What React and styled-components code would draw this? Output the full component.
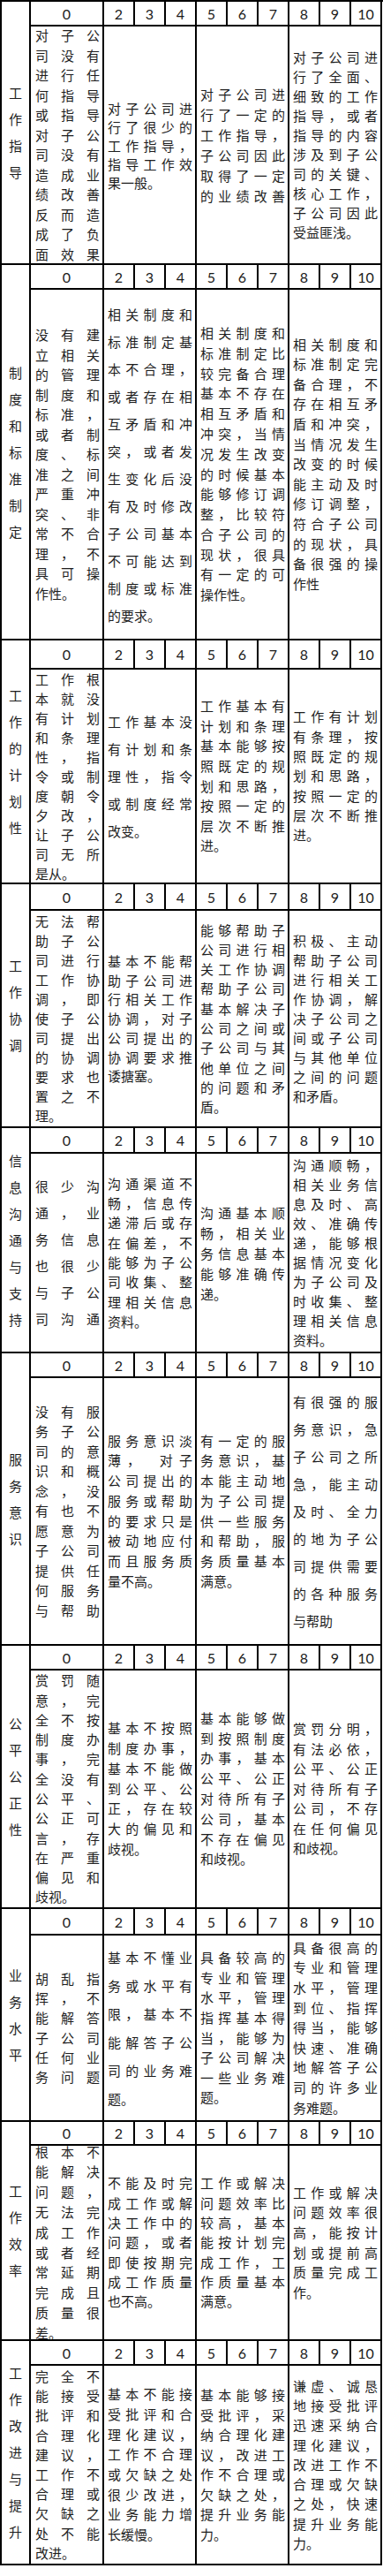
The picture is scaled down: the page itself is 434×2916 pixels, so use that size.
import React from 'react';
import styled, { createGlobalStyle } from 'styled-components';

const GlobalStyle = createGlobalStyle`
  html, body {
    margin: 0;
    padding: 0;
    background: #fff;
  }
  body {
    font-family: "Noto Sans CJK SC", "Noto Sans", sans-serif;
    color: #1e1e1e;
  }
`;

const SCORES = ['0', '2', '3', '4', '5', '6', '7', '8', '9', '10'];

const SECTIONS = [
  {
    label: '工作指导',
    hh: 28,
    bh: 270,
    cells: [
      { lh: 22.5, lines: ['对子公', '司没有', '进行任', '何指导', '或指导', '对子公', '司没有', '造成业', '绩改善', '反而造', '成了负', '面效果'], full: true },
      { lh: 21, lines: ['对子公司进', '行了很少的', '工作指导，', '指导工作效', '果一般。'] },
      { lh: 23, lines: ['对子公司进', '行了一定的', '工作指导，', '子公司因此', '取得了一定', '的业绩改善'], full: true },
      { lh: 22, lines: ['对子公司进', '行了全面、', '细致的工作', '指导，或者', '指导的内容', '涉及到子公', '司的关键、', '核心工作，', '子公司因此', '受益匪浅。'] },
    ],
  },
  {
    label: '制度和标准制定',
    hh: 28,
    bh: 397,
    cells: [
      { lh: 22.5, lines: ['没有建', '立相关', '的管理', '制度和', '标准，', '或者制', '度、标', '准之间', '严重冲', '突、非', '常不合', '理，不', '具可操', '作性。'] },
      { lh: 31, lines: ['相关制度和', '标准制定基', '本不合理，', '或者存在相', '互矛盾和冲', '突，或者发', '生变化后没', '有及时修改', '子公司基本', '不可能达到', '制度或标准', '的要求。'] },
      { lh: 22.8, lines: ['相关制度和', '标准制定比', '较完备合理', '基本不存在', '相互矛盾和', '冲突，当情', '况发生改变', '的时候基本', '能够修订调', '整，比较符', '合子公司的', '现状，很具', '有一定的可', '操作性。'] },
      { lh: 22.6, lines: ['相关制度和', '标准制定完', '备合理，不', '存在相互矛', '盾和冲突，', '当情况发生', '改变的时候', '能主动及时', '修订调整，', '符合子公司', '的现状，具', '备很强的操', '作性'] },
    ],
  },
  {
    label: '工作的计划性',
    hh: 33,
    bh: 243,
    cells: [
      { lh: 22, lines: ['工作根', '本就没', '有计划', '和条理', '性，指', '令或制', '度朝令', '夕改，', '让子公', '司无所', '是从。'] },
      { lh: 31, lines: ['工作基本没', '有计划和条', '理性，指令', '或制度经常', '改变。'] },
      { lh: 22.6, lines: ['工作基本有', '计划和条理', '基本能够按', '照既定的规', '划和思路，', '按照一定的', '层次不断推', '进。'] },
      { lh: 22.3, lines: ['工作有计划', '有条理，按', '照既定的规', '划和思路，', '按照一定的', '层次不断推', '进。'] },
    ],
  },
  {
    label: '工作协调',
    hh: 30,
    bh: 246,
    cells: [
      { lh: 22, lines: ['无法帮', '助子公', '司进行', '工作协', '调，即', '使子公', '司提出', '的协调', '要求也', '置之不', '理。'] },
      { lh: 21.7, lines: ['基本不能帮', '助子公司进', '行相关工作', '协调，对子', '公司提出的', '协调要求推', '诿搪塞。'] },
      { lh: 22.3, lines: ['能够帮助子', '公司进行相', '关工作协调', '帮助子公司', '基本解决子', '公司之间或', '子公司与其', '他单位之间', '的问题和矛', '盾。'] },
      { lh: 22, lines: ['积极、主动', '帮助子公司', '进行相关工', '作协调，解', '决子公司之', '间或子公司', '与其他单位', '之间的问题', '和矛盾。'] },
    ],
  },
  {
    label: '信息沟通与支持',
    hh: 29,
    bh: 226,
    cells: [
      { lh: 30, lines: ['很少沟', '通，业', '务信息', '也很少', '与子公', '司沟通'], full: true },
      { lh: 22.3, lines: ['沟通渠道不', '畅，信息传', '递滞后或存', '在偏差，不', '能够为子公', '司收集、整', '理相关信息', '资料。'] },
      { lh: 23, lines: ['沟通基本顺', '畅，相关业', '务信息基本', '能够准确传', '递。'] },
      { lh: 22, lines: ['沟通顺畅，', '相关业务信', '息及时、高', '效、准确传', '递，能够根', '据情况变化', '为子公司及', '时收集、整', '理相关信息', '资料。'] },
    ],
  },
  {
    label: '服务意识',
    hh: 28,
    bh: 303,
    cells: [
      { lh: 22.5, lines: ['没有服', '务子公', '司的意', '识和概', '念，没', '有也不', '愿意为', '子公司', '提供任', '何服务', '与帮助'], full: true },
      { lh: 22.7, lines: ['服务意识淡', '薄，\u3000对子', '公司提出的', '服务或帮助', '的要求只是', '被动地应付', '而且服务质', '量不高。'] },
      { lh: 22.7, lines: ['有一定的服', '务意识，基', '本能主动地', '为子公司提', '供一些服务', '和帮助，服', '务质量基本', '满意。'] },
      { lh: 31, lines: ['有很强的服', '务意识，急', '子公司之所', '急，能主动', '及时、全力', '的地为子公', '司提供需要', '的各种服务', '与帮助'] },
    ],
  },
  {
    label: '公平公正性',
    hh: 28,
    bh: 270,
    cells: [
      { lh: 22.3, lines: ['赏罚随', '意，完', '全不按', '制度办', '事，完', '全没有', '公平、', '公正可', '言，存', '在严重', '偏见和', '歧视。'] },
      { lh: 22.8, lines: ['基本不按照', '制度办事，', '基本不能做', '到公平、公', '正，存在较', '大的偏见和', '歧视。'] },
      { lh: 22.8, lines: ['基本能够做', '到按照制度', '办事，基本', '公平、公正', '对待所有子', '公司，基本', '不存在偏见', '和歧视。'] },
      { lh: 22.5, lines: ['赏罚分明，', '有法必依，', '公平、公正', '对待所有子', '公司，不存', '在任何偏见', '和歧视。'] },
    ],
  },
  {
    label: '业务水平',
    hh: 30,
    bh: 211,
    cells: [
      { lh: 22.3, lines: ['胡乱指', '挥，不', '能解答', '子公司', '任何业', '务问题'], full: true },
      { lh: 32, lines: ['基本不懂业', '务或水平有', '限，基本不', '能解答子公', '司的业务难', '题。'] },
      { lh: 22.6, lines: ['具备较高的', '专业和管理', '水平，管理', '指挥基本得', '当，能够为', '子公司解决', '一些业务难', '题。'] },
      { lh: 22.6, lines: ['具备很高的', '专业和管理', '水平，管理', '到位、指挥', '得当，能够', '快速、准确', '地解答子公', '司的许多业', '务难题。'] },
    ],
  },
  {
    label: '工作效率',
    hh: 27,
    bh: 221,
    cells: [
      { lh: 22.8, lines: ['根本不', '能解决', '问题，', '无法完', '成工作', '或者经', '常延期', '完成且', '质量很', '差。'] },
      { lh: 22.3, lines: ['不能及时完', '成工作或解', '决工作中的', '问题，或者', '即使按期完', '成工作质量', '也不高。'] },
      { lh: 22.3, lines: ['工作或解决', '问题效率比', '较高，基本', '能按计划完', '成工作，工', '作质量基本', '满意。'] },
      { lh: 22.6, lines: ['工作或解决', '问题效率很', '高，能按计', '划或提前高', '质量完成工', '作。'] },
    ],
  },
  {
    label: '工作改进与提升',
    hh: 28,
    bh: 226,
    cells: [
      { lh: 22.2, lines: ['完全不', '能接受', '批评和', '合理化', '建议，', '工作不', '合理或', '欠缺之', '处不能', '改进。'] },
      { lh: 22.7, lines: ['基本不能接', '受批评和合', '理化建议，', '工作不合理', '或欠缺之处', '很少改进，', '业务能力增', '长缓慢。'] },
      { lh: 22.5, lines: ['基本能够接', '受批评，采', '纳合理化建', '议，改进工', '作不合理或', '欠缺之处，', '提升业务能', '力。'] },
      { lh: 22.2, lines: ['谦虚、诚恳', '地接受批评', '迅速采纳合', '理化建议，', '改进工作不', '合理或欠缺', '之处，快速', '提升业务能', '力。'] },
    ],
  },
];

const Sheet = styled.div`
  width: 434px;
  box-sizing: border-box;
  border-left: 2px solid #000;
  border-top: 2px solid #000;
  margin-bottom: 13px;
`;

const Section = styled.div`
  display: grid;
  grid-template-columns: 33px 83px repeat(9, 35px);
  grid-template-rows: ${(p) => p.$hh}px ${(p) => p.$bh}px;
`;

const Cell = styled.div`
  box-sizing: border-box;
  border-right: 2px solid #000;
  border-bottom: 2px solid #000;
  min-width: 0;
  min-height: 0;
`;

const Label = styled(Cell)`
  grid-row: 1 / span 2;
  grid-column: 1;
  display: flex;
  flex-direction: column;
  align-items: center;
  justify-content: center;
  font-size: 15px;
  line-height: 30px;
`;

const Score = styled(Cell)`
  display: flex;
  align-items: center;
  justify-content: center;
  font-family: Lato, "Open Sans", sans-serif;
  font-size: 16px;
  color: #1a1a1a;
`;

const TextCell = styled(Cell)`
  grid-column: span ${(p) => p.$span};
  display: flex;
  flex-direction: column;
  justify-content: center;
  padding: ${(p) => (p.$span === 1 ? '0 3px 0 5px' : '0 3px 0 4px')};
  font-size: 15px;
  line-height: ${(p) => p.$lh}px;
`;

const Line = styled.div`
  text-align: justify;
  text-align-last: ${(p) => (p.$last ? 'left' : 'justify')};
`;

const Rubric = ({ cell, span }) => (
  <TextCell $span={span} $lh={cell.lh}>
    {cell.lines.map((text, i) => (
      <Line key={i} $last={i === cell.lines.length - 1 && !cell.full}>
        {text}
      </Line>
    ))}
  </TextCell>
);

const App = () => (
  <>
    <GlobalStyle />
    <Sheet>
      {SECTIONS.map((s) => (
        <Section key={s.label} $hh={s.hh} $bh={s.bh}>
          <Label>
            {s.label.split('').map((ch, i) => (
              <span key={i}>{ch}</span>
            ))}
          </Label>
          {SCORES.map((n) => (
            <Score key={n}>{n}</Score>
          ))}
          {s.cells.map((c, i) => (
            <Rubric key={i} cell={c} span={i === 0 ? 1 : 3} />
          ))}
        </Section>
      ))}
    </Sheet>
  </>
);

export default App;
